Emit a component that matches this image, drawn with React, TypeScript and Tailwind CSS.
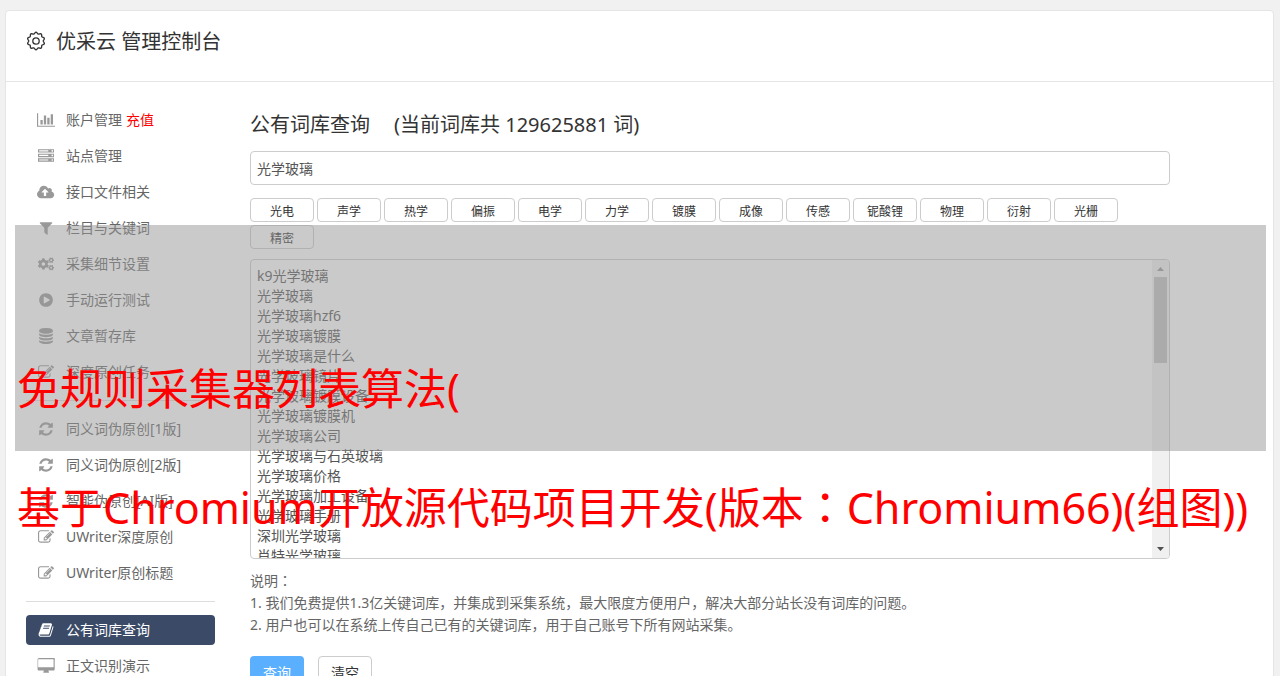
// Console page: keyword library lookup with side navigation

import type { ReactNode } from 'react'
import { FaCogs } from 'react-icons/fa'

function Glyph({ d, width = 1792 }: { d: string; width?: number }) {
  return (
    <svg viewBox={`0 0 ${width} 1792`} className="h-4 w-auto fill-current" aria-hidden="true">
      <path d={d} />
    </svg>
  )
}

const barChart = (
  <Glyph
    width={2048}
    d="M640 896v512h-256v-512h256zm384-512v1024h-256v-1024h256zm1024 1152v128h-2048v-1536h128v1408h1920zm-640-896v768h-256v-768h256zm384-384v1152h-256v-1152h256z"
  />
)
const server = (
  <Glyph d="M128 1408h1024v-128h-1024v128zm0-512h1024v-128h-1024v128zm1568 448q0-40-28-68t-68-28-68 28-28 68 28 68 68 28 68-28 28-68zm-1568-960h1024v-128h-1024v128zm1568 448q0-40-28-68t-68-28-68 28-28 68 28 68 68 28 68-28 28-68zm0-512q0-40-28-68t-68-28-68 28-28 68 28 68 68 28 68-28 28-68zm96 832v384h-1792v-384h1792zm0-512v384h-1792v-384h1792zm0-512v384h-1792v-384h1792z" />
)
const cloudUpload = (
  <Glyph
    width={1920}
    d="M1280 928q0-14-9-23l-352-352q-9-9-23-9t-23 9l-351 351q-10 12-10 24 0 14 9 23t23 9h224v352q0 13 9.5 22.5t22.5 9.5h192q13 0 22.5-9.5t9.5-22.5v-352h224q13 0 22.5-9.5t9.5-22.5zm640 288q0 159-112.5 271.5t-271.5 112.5h-1088q-185 0-316.5-131.5t-131.5-316.5q0-130 70-240t188-165q-2-30-2-43 0-212 150-362t362-150q156 0 285.5 87t188.5 231q71-62 166-62 106 0 181 75t75 181q0 76-41 138 130 31 213.5 135.5t83.5 238.5z"
  />
)
const filter = (
  <Glyph d="M1595 295q17 41-14 70l-493 493v742q0 42-39 59-13 5-25 5-27 0-45-19l-256-256q-19-19-19-45v-486l-493-493q-31-29-14-70 17-39 59-39h1280q42 0 59 39z" />
)
const playCircle = (
  <Glyph d="M896 128q209 0 385.5 103t279.5 279.5 103 385.5-103 385.5-279.5 279.5-385.5 103-385.5-103-279.5-279.5-103-385.5 103-385.5 279.5-279.5 385.5-103zm384 823q32-18 32-55t-32-55l-544-320q-31-19-64-1-32 19-32 56v640q0 37 32 56 16 8 32 8 17 0 32-9z" />
)
const database = (
  <Glyph d="M896 768q237 0 443-43t325-127v170q0 69-103 128t-280 93.5-385 34.5-385-34.5-280-93.5-103-128v-170q119 84 325 127t443 43zm0 768q237 0 443-43t325-127v170q0 69-103 128t-280 93.5-385 34.5-385-34.5-280-93.5-103-128v-170q119 84 325 127t443 43zm0-384q237 0 443-43t325-127v170q0 69-103 128t-280 93.5-385 34.5-385-34.5-280-93.5-103-128v-170q119 84 325 127t443 43zm0-1152q208 0 385 34.5t280 93.5 103 128v128q0 69-103 128t-280 93.5-385 34.5-385-34.5-280-93.5-103-128v-128q0-69 103-128t280-93.5 385-34.5z" />
)
const edit = (
  <Glyph d="M888 1184l116-116-152-152-116 116v56h96v96h56zm440-720q-16-16-33 1l-350 350q-17 17-1 33t33-1l350-350q17-17 1-33zm80 594v190q0 119-84.5 203.5t-203.5 84.5h-832q-119 0-203.5-84.5t-84.5-203.5v-832q0-119 84.5-203.5t203.5-84.5h832q63 0 117 25 15 7 18 23 3 17-9 29l-49 49q-14 14-32 8-23-6-45-6h-832q-66 0-113 47t-47 113v832q0 66 47 113t113 47h832q66 0 113-47t47-113v-126q0-13 9-22l64-64q15-15 35-7t20 29zm-96-738l288 288-672 672h-288v-288zm444 132l-92 92-288-288 92-92q28-28 68-28t68 28l152 152q28 28 28 68t-28 68z" />
)
const refresh = (
  <Glyph d="M1639 1056q0 5-1 7-64 268-268 434.5t-478 166.5q-146 0-282.5-55t-243.5-157l-129 129q-19 19-45 19t-45-19-19-45v-448q0-26 19-45t45-19h448q26 0 45 19t19 45-19 45l-137 137q71 66 161 102t187 36q134 0 250-65t186-179q11-17 53-117 8-23 30-23h192q13 0 22.5 9.5t9.5 22.5zm25-800v448q0 26-19 45t-45 19h-448q-26 0-45-19t-19-45 19-45l138-138q-148-137-349-137-134 0-250 65t-186 179q-11 17-53 117-8 23-30 23h-199q-13 0-22.5-9.5t-9.5-22.5v-7q65-268 270-434.5t480-166.5q146 0 284 55.5t245 156.5l130-129q19-19 45-19t45 19 19 45z" />
)
const book = (
  <Glyph d="M1703 478q40 57 18 129l-275 906q-19 64-76.5 107.5t-122.5 43.5h-923q-77 0-148.5-53.5t-99.5-131.5q-24-67-2-127 0-4 3-27t4-37q1-8-3-21.5t-3-19.5q2-11 8-21t16.5-23.5 16.5-23.5q23-38 45-91.5t30-91.5q3-10 .5-30t-.5-28q3-11 17-28t17-23q21-36 42-92t25-90q1-9-2.5-32t.5-28q4-13 22-30.5t22-22.5q19-26 42.5-84.5t27.5-96.5q1-8-3-25.5t-2-26.5q2-8 9-18t18-23 17-21q8-12 16.5-30.5t15-35 16-36 19.5-32 26.5-23.5 36-11.5 47.5 5.5l-1 3q38-9 51-9h761q74 0 114 56t18 130l-274 906q-36 119-71.5 153.5t-128.5 34.5h-869q-27 0-38 15-11 16-1 43 24 70 144 70h923q29 0 56-15.5t35-41.5l300-987q7-22 5-57 38 15 59 43zm-1064 2q-4 13 2 22.5t20 9.5h608q13 0 25.5-9.5t16.5-22.5l21-64q4-13-2-22.5t-20-9.5h-608q-13 0-25.5 9.5t-16.5 22.5zm-83 256q-4 13 2 22.5t20 9.5h608q13 0 25.5-9.5t16.5-22.5l21-64q4-13-2-22.5t-20-9.5h-608q-13 0-25.5 9.5t-16.5 22.5z" />
)
const desktop = (
  <Glyph
    width={1984}
    d="M1856 992v-832q0-13-9.5-22.5t-22.5-9.5h-1664q-13 0-22.5 9.5t-9.5 22.5v832q0 13 9.5 22.5t22.5 9.5h1664q13 0 22.5-9.5t9.5-22.5zm128-832v1088q0 66-47 113t-113 47h-544q0 37 16 77.5t32 71 16 43.5q0 26-19 45t-45 19h-512q-26 0-45-19t-19-45q0-14 16-44t32-70 16-78h-544q-66 0-113-47t-47-113v-1088q0-66 47-113t113-47h1664q66 0 113 47t47 113z"
  />
)

// Outline of the header gear: a circle whose radius swells at each of ten teeth
const gearOutline = Array.from({ length: 120 }, (_, i) => {
  const a = (i / 120) * Math.PI * 2
  const r = 8 + 0.75 * Math.cos(10 * a)
  return `${(10 + r * Math.sin(a)).toFixed(2)},${(10 - r * Math.cos(a)).toFixed(2)}`
}).join(' ')

interface NavItem {
  label: string
  icon: ReactNode
  extra?: string
  active?: boolean
}

const navGroups: NavItem[][] = [
  [
    { label: '账户管理', icon: barChart, extra: '充值' },
    { label: '站点管理', icon: server },
    { label: '接口文件相关', icon: cloudUpload },
    { label: '栏目与关键词', icon: filter },
    { label: '采集细节设置', icon: <FaCogs className="h-4 w-auto" /> },
    { label: '手动运行测试', icon: playCircle },
    { label: '文章暂存库', icon: database },
    { label: '深度原创任务', icon: edit },
  ],
  [
    { label: '同义词伪原创[1版]', icon: refresh },
    { label: '同义词伪原创[2版]', icon: refresh },
    { label: '智能伪原创[AI版]', icon: refresh },
    { label: 'UWriter深度原创', icon: edit },
    { label: 'UWriter原创标题', icon: edit },
  ],
  [
    { label: '公有词库查询', icon: book, active: true },
    { label: '正文识别演示', icon: desktop },
  ],
]

const tags = ['光电', '声学', '热学', '偏振', '电学', '力学', '镀膜', '成像', '传感', '铌酸锂', '物理', '衍射', '光栅', '精密']

const keywords = [
  'k9光学玻璃',
  '光学玻璃',
  '光学玻璃hzf6',
  '光学玻璃镀膜',
  '光学玻璃是什么',
  '光学玻璃镜片',
  '光学玻璃镀膜设备',
  '光学玻璃镀膜机',
  '光学玻璃公司',
  '光学玻璃与石英玻璃',
  '光学玻璃价格',
  '光学玻璃加工设备',
  '光学玻璃手册',
  '深圳光学玻璃',
  '肖特光学玻璃',
]

// Full-width colon centred in its cell
function Colon() {
  return <span className="font-['Noto_Sans_CJK_TC',sans-serif]">：</span>
}

function Header() {
  return (
    <header className="flex h-[71px] items-start gap-2.5 border-b border-[#e5e5e5] px-5 pt-4">
      <svg viewBox="0 0 20 20" className="mt-1 size-5 fill-none stroke-[#333]" strokeWidth="1.3" aria-hidden="true">
        <polygon points={gearOutline} strokeLinejoin="round" />
        <circle cx="10" cy="10" r="3.2" />
      </svg>
      <h1 className="text-xl leading-[30px] text-[#333]">优采云 管理控制台</h1>
    </header>
  )
}

function Sidebar() {
  return (
    <nav className="w-[189px] flex-shrink-0">
      {navGroups.map((group, i) => (
        <ul
          key={i}
          className={`flex flex-col gap-1.5 ${i > 0 ? 'mt-[13px] border-t border-[#ddd] pt-[13px]' : ''}`}
        >
          {group.map((item) => (
            <li
              key={item.label}
              className={`flex h-[30px] items-center rounded px-2.5 text-sm ${
                item.active ? 'bg-[#3b4a66] text-white' : 'text-[#666]'
              }`}
            >
              <a href="#" className="flex items-center gap-2.5">
                <span className={`flex w-5 justify-center ${item.active ? 'text-white' : 'text-[#999]'}`}>
                  {item.icon}
                </span>
                {item.label}
              </a>
              {item.extra && (
                <a href="#" className="ml-1 text-[#f00]">
                  {item.extra}
                </a>
              )}
            </li>
          ))}
        </ul>
      ))}
    </nav>
  )
}

function KeywordList() {
  return (
    <div className="mt-2.5 flex h-[300px] overflow-hidden rounded border border-[#ccc]">
      <textarea
        aria-label="关键词列表"
        className="flex-1 resize-none overflow-hidden px-1.5 pt-1.5 text-sm leading-5 text-[#555] outline-none"
        defaultValue={keywords.join('\n')}
      />
      <div className="flex w-[17px] flex-col items-center bg-[#f0f0f0]">
        <svg viewBox="0 0 17 17" className="size-[17px] fill-[#999]" aria-hidden="true">
          <path d="M5 11h7L8.5 7z" />
        </svg>
        <div className="h-[86px] w-[13px] bg-[#c1c1c1]" />
        <svg viewBox="0 0 17 17" className="mt-auto size-[17px] fill-[#505050]" aria-hidden="true">
          <path d="M5 6h7l-3.5 4z" />
        </svg>
      </div>
    </div>
  )
}

function LibrarySearch() {
  return (
    <main className="min-w-0 max-w-[920px] flex-1 text-sm text-[#666]">
      <h2 className="mt-1 flex gap-6 text-xl leading-8 text-[#333]">
        <span>公有词库查询</span>
        <span>(当前词库共 129625881 词)</span>
      </h2>
      <input
        type="text"
        aria-label="关键词"
        defaultValue="光学玻璃"
        className="mt-2.5 h-[34px] w-full rounded border border-[#ccc] px-1.5 text-sm text-[#555] outline-none"
      />
      <div className="mt-[13px] flex flex-wrap gap-[3px]">
        {tags.map((tag) => (
          <button key={tag} type="button" className="h-6 w-16 rounded border border-[#ccc] pt-1 text-xs text-[#333]">
            {tag}
          </button>
        ))}
      </div>
      <KeywordList />
      <div className="mt-2.5 leading-[22px]">
        <p>
          说明
          <Colon />
        </p>
        <p>1. 我们免费提供1.3亿关键词库，并集成到采集系统，最大限度方便用户，解决大部分站长没有词库的问题。</p>
        <p>2. 用户也可以在系统上传自己已有的关键词库，用于自己账号下所有网站采集。</p>
      </div>
      <div className="mt-5 flex gap-3.5">
        <button type="button" className="h-[34px] w-[54px] rounded bg-[#5aafff] text-white">
          查询
        </button>
        <button type="button" className="h-[34px] w-[54px] rounded border border-[#ccc] text-[#333]">
          清空
        </button>
      </div>
    </main>
  )
}

// Translucent band with the headline written over the page
function Banner() {
  return (
    <div className="pointer-events-none absolute top-[225px] right-3.5 left-[15px] h-[226px] bg-[#969696]/50">
      <div className="flex flex-col gap-14 pl-0.5 pt-[134px] text-[43px] leading-[60px] whitespace-nowrap text-[#f00]">
        <p>免规则采集器列表算法(</p>
        <p>
          基于Chromium开放源代码项目开发(版本
          <Colon />
          Chromium66)(组图))
        </p>
      </div>
    </div>
  )
}

export default function App() {
  return (
    <div className="relative h-screen overflow-hidden bg-[#f1f1f1] pt-2.5 pr-1.5 pl-[5px] font-['Noto_Sans','Noto_Sans_CJK_SC',sans-serif]">
      <div className="min-h-full rounded border border-[#e5e5e5] bg-white">
        <Header />
        <div className="flex gap-[35px] px-5 pt-[23px]">
          <Sidebar />
          <LibrarySearch />
        </div>
      </div>
      <Banner />
    </div>
  )
}
